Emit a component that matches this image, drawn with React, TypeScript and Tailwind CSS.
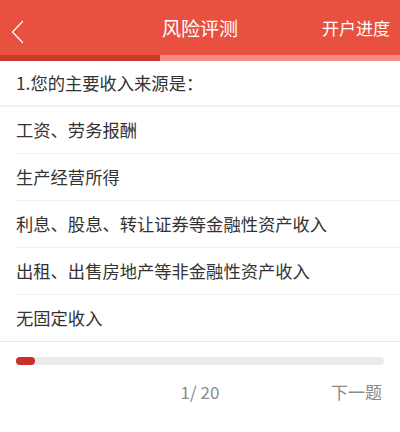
const options = [
  '工资、劳务报酬',
  '生产经营所得',
  '利息、股息、转让证券等金融性资产收入',
  '出租、出售房地产等非金融性资产收入',
  '无固定收入',
]

function BackArrow() {
  return (
    <svg width="14" height="24" viewBox="0 0 14 24" fill="none" className="ml-[11px] mt-[9px]">
      <polyline points="11.5,1.5 1.5,12 11.5,22.5" stroke="white" strokeWidth="1.2" strokeLinecap="round" strokeLinejoin="round" />
    </svg>
  )
}

export default function App() {
  return (
    <div
      className="w-[400px] h-[432px] bg-white overflow-hidden"
      style={{ fontFamily: '"Noto Sans CJK SC", "Noto Sans", sans-serif' }}
    >
      {/* Top bar */}
      <header className="relative flex h-[55px] items-center bg-[#e8503f] text-white">
        <BackArrow />
        <h1 className="absolute left-1/2 -translate-x-1/2 text-[19px] leading-none">风险评测</h1>
        <span className="ml-auto mr-[10px] text-[17px] leading-none">开户进度</span>
      </header>

      {/* Step progress */}
      <div className="flex h-[6px]">
        <div className="w-[160px] bg-[#c53a2d]" />
        <div className="flex-1 bg-[#f28e86]" />
      </div>

      {/* Question */}
      <div className="flex h-[46px] items-center border-b-2 border-[#f1f1f1] px-4 text-[17.3px] text-[#333]">
        1.您的主要收入来源是：
      </div>

      <ul className="border-b border-[#e8e8e8]">
        {options.map((opt, i) => (
          <li key={opt} className="pl-4">
            <div
              className={`flex h-[46px] items-center text-[17.3px] text-[#333] ${
                i < options.length - 1 ? 'border-b border-[#efefef] h-[47px]' : ''
              }`}
            >
              {opt}
            </div>
          </li>
        ))}
      </ul>

      {/* Progress */}
      <div className="px-4 pt-[15px]">
        <div className="h-[8px] rounded-full bg-[#ebebeb]">
          <div className="h-full w-[19px] rounded-full bg-[#c9302c]" />
        </div>
      </div>

      <div className="relative mt-[14px] flex h-[26px] items-center text-[17px] text-[#8a8a8a]">
        <span className="absolute left-1/2 -translate-x-1/2">1/ 20</span>
        <span className="ml-auto mr-[18px]">下一题</span>
      </div>
    </div>
  )
}
